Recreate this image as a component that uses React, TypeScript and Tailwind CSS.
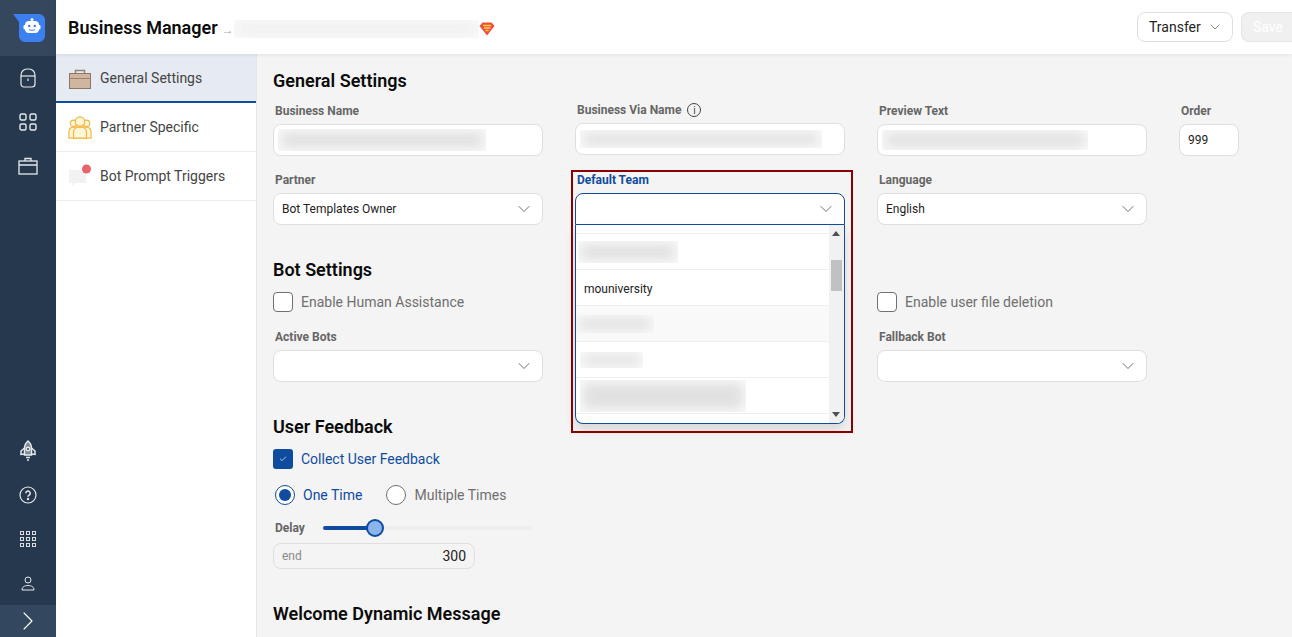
import type { ReactNode } from 'react';
import { ChevronDown, ChevronRight, Check } from 'lucide-react';

function Logo() {
  return (
    <svg width="32" height="28" viewBox="0 0 32 28">
      <path d="M0 0H26a6 6 0 0 1 6 6V22a6 6 0 0 1-6 6H12a6 6 0 0 1-6-6V8z" fill="#3b7ff0" />
      <circle cx="19" cy="5.5" r="1.5" fill="#fff" />
      <rect x="12" y="7" width="14" height="12" rx="4" fill="#fff" />
      <rect x="10.5" y="11" width="2" height="4.5" rx="1" fill="#fff" />
      <rect x="25.5" y="11" width="2" height="4.5" rx="1" fill="#fff" />
      <circle cx="16.2" cy="12" r="1.2" fill="#3b7ff0" />
      <circle cx="21.8" cy="12" r="1.2" fill="#3b7ff0" />
      <path d="M16 15.5c1.5 1.2 4.5 1.2 6 0" stroke="#3b7ff0" strokeWidth="1" fill="none" />
    </svg>
  );
}

function BagIcon() {
  return (
    <svg width="16" height="20" viewBox="0 0 16 20" fill="none" stroke="#e6e9ec" strokeWidth="1.2">
      <path d="M1 7a6 6 0 0 1 6-6h2a6 6 0 0 1 6 6v9a3 3 0 0 1-3 3H4a3 3 0 0 1-3-3z" />
      <path d="M1 8h14" />
      <path d="M8 10.500v2.500" />
    </svg>
  );
}

function TilesIcon() {
  return (
    <svg width="18" height="18" viewBox="0 0 18 18" fill="none" stroke="#e6e9ec" strokeWidth="1.4">
      <rect x="1" y="1" width="6" height="6" rx="1.5" />
      <rect x="11" y="1" width="6" height="6" rx="1.5" />
      <rect x="1" y="11" width="6" height="6" rx="1.5" />
      <rect x="11" y="11" width="6" height="6" rx="1.5" />
    </svg>
  );
}

function CaseIcon() {
  return (
    <svg width="20" height="18" viewBox="0 0 20 18" fill="none" stroke="#e6e9ec" strokeWidth="1.3">
      <rect x="1" y="4" width="18" height="13" />
      <path d="M1 8h18M7 4V1.500h6V4" />
    </svg>
  );
}

function RocketIcon() {
  return (
    <svg width="16" height="22" viewBox="0 0 16 22" fill="none" stroke="#e6e9ec" strokeWidth="1.5">
      <path d="M8 1c2.500 2 3.500 4.500 3.500 7.500V15h-7V8.500C4.500 5.500 5.500 3 8 1z" fill="#7f8b99" />
      <path d="M4.500 8 1 11v3.500l3.500-.5M11.500 8l3.500 3v3.500l-3.500-.5" />
      <circle cx="8" cy="9" r="1.700" fill="#26384e" />
      <path d="M6 17.500h4M7 20h2" />
    </svg>
  );
}

function HelpIcon() {
  return (
    <svg width="18" height="18" viewBox="0 0 18 18" fill="none" stroke="#e6e9ec" strokeWidth="1.2">
      <circle cx="9" cy="9" r="8" />
      <path d="M6.800 7.200a2.200 2.200 0 1 1 3.400 1.900c-.8.500-1.200.9-1.200 1.700" strokeWidth="1.500" />
      <circle cx="9" cy="13" r=".6" fill="#e6e9ec" />
    </svg>
  );
}

function DotsIcon() {
  const cells = [1.5, 7.5, 13.5];
  return (
    <svg width="18" height="18" viewBox="0 0 18 18" fill="none" stroke="#d9dde1" strokeWidth="1">
      {cells.map((y) =>
        cells.map((x) => <rect key={`${x}-${y}`} x={x} y={y} width="3" height="3" />)
      )}
    </svg>
  );
}

function UserIcon() {
  return (
    <svg width="14" height="15" viewBox="0 0 14 15" fill="none" stroke="#e6e9ec" strokeWidth="1">
      <circle cx="7" cy="4" r="3" />
      <path d="M1 14c0-3 2.500-4.500 6-4.500s6 1.500 6 4.500z" />
    </svg>
  );
}

function SuperShield() {
  return (
    <svg width="16" height="14" viewBox="0 0 16 14">
      <path d="M3.500 .5h9L15.500 4 8 13.500.5 4z" fill="#ef4f3c" />
      <path d="M4 3.500h8M5 6h6.500M6.500 8.500h3" stroke="#f8d04a" strokeWidth="1.300" />
    </svg>
  );
}

function BriefcaseColor() {
  return (
    <svg width="22" height="20" viewBox="0 0 22 20">
      <path d="M6.500 4.500V1.500h9v3" fill="none" stroke="#9a8374" strokeWidth="1.500" />
      <rect x=".5" y="4.500" width="21" height="15" fill="#d0b5a1" stroke="#8d7768" strokeWidth="1" />
      <path d="M.5 9.500h21" stroke="#8d7768" strokeWidth=".8" />
    </svg>
  );
}

function PeopleColor() {
  return (
    <svg width="26" height="25" viewBox="0 0 26 25" fill="#fff6d6" stroke="#f5b547" strokeWidth="1.300">
      <circle cx="6" cy="8" r="3.500" />
      <circle cx="20" cy="8" r="3.500" />
      <path d="M1 24v-6c0-4 2-6 5-6h14c3 0 5 2 5 6v6z" />
      <circle cx="13" cy="6" r="5" />
      <path d="M6 24v-7c0-3 3-5 7-5s7 2 7 5v7z" />
    </svg>
  );
}

function BubbleColor() {
  return (
    <svg width="24" height="24" viewBox="0 0 24 24">
      <path d="M1 6h17v13H8l-3.500 3v-3H1z" fill="#f2f2f2" />
      <circle cx="18.500" cy="5" r="4.500" fill="#e8636a" />
    </svg>
  );
}

function Rail() {
  const cell = 'flex h-[44px] items-center justify-center';
  return (
    <aside className="flex h-full w-[56px] shrink-0 flex-col bg-[#26384e]">
      <div className="flex h-[56px] items-center justify-center bg-[#35475c] pl-[1px]">
        <Logo />
      </div>
      <div className={cell}><BagIcon /></div>
      <div className={cell}><TilesIcon /></div>
      <div className={cell}><CaseIcon /></div>
      <div className="mt-auto" />
      <div className={cell}><RocketIcon /></div>
      <div className={cell}><HelpIcon /></div>
      <div className={cell}><DotsIcon /></div>
      <div className={cell}><UserIcon /></div>
      <div className="flex h-[32px] items-center justify-center bg-[#33485e]">
        <ChevronRight size={32} strokeWidth={0.8} color="#ffffff" />
      </div>
    </aside>
  );
}

function Redacted({ w, h, soft = false }: { w: number; h: number; soft?: boolean }) {
  return (
    <div className="overflow-hidden bg-[#fafafa]" style={{ width: w, height: h }}>
      <div
        className={`m-[3px] h-[calc(100%-6px)] blur-[6px] ${soft ? 'bg-[#efefef]' : 'bg-[#e0e0e0]'}`}
      />
    </div>
  );
}

function Label({ children, color = 'text-[#666666]' }: { children: ReactNode; color?: string }) {
  return (
    <div className={`mb-[5px] flex h-[16px] items-center pl-[2px] text-[12px] font-bold ${color}`}>
      {children}
    </div>
  );
}

function Box({ children, className = '' }: { children?: ReactNode; className?: string }) {
  return (
    <div className={`flex items-center rounded-[8px] border border-[#dfdfdf] bg-white ${className}`}>
      {children}
    </div>
  );
}

function Select({ value }: { value?: string }) {
  return (
    <Box className="h-[32px] justify-between pl-[8px] pr-[8px] text-[12px] text-[#222222]">
      <span>{value}</span>
      <ChevronDown size={20} strokeWidth={1} color="#555555" />
    </Box>
  );
}

function Heading({ children, className = '' }: { children: ReactNode; className?: string }) {
  return (
    <h2 className={`flex h-[26px] items-center text-[18px] font-semibold text-[#0b0b0b] ${className}`}>
      {children}
    </h2>
  );
}

function CheckRow({ label, checked = false }: { label: string; checked?: boolean }) {
  return (
    <div className="flex h-[20px] items-center gap-[8px]">
      {checked ? (
        <span className="flex h-[20px] w-[20px] items-center justify-center rounded-[3px] bg-[#0f4c9f]">
          <Check size={8} color="#ffffff" strokeWidth={2} />
        </span>
      ) : (
        <span className="h-[20px] w-[20px] rounded-[4px] border border-[#707070] bg-white" />
      )}
      <span className={`text-[14px] ${checked ? 'text-[#0f4c9f]' : 'text-[#6f6f6f]'}`}>{label}</span>
    </div>
  );
}

const teamRows = [
  { node: <div className="pl-[2px]"><Redacted w={100} h={22} /></div> },
  { node: <span className="mt-[2px] pl-[8px] text-[12px] text-[#222222]">mouniversity</span> },
  { node: <Redacted w={78} h={18} />, shaded: true },
  { node: <div className="pl-[4px]"><Redacted w={63} h={16} /></div> },
  { node: <div className="pl-[4px]"><Redacted w={166} h={32} /></div> },
];

function TeamDropdown() {
  return (
    <div className="absolute left-0 right-0 top-[32px] z-20 flex h-[199px] overflow-hidden rounded-b-[8px] border border-t-0 border-[#0f4c9f] bg-white shadow-[0_6px_12px_rgba(0,0,0,0.12)]">
      <div className="flex-1">
        <div className="h-[9px] border-b border-[#efefef]" />
        {teamRows.map((row, i) => (
          <div
            key={i}
            className={`flex h-[36px] items-center border-b border-[#efefef] ${row.shaded ? 'bg-[#f9f9f9]' : ''}`}
          >
            {row.node}
          </div>
        ))}
      </div>
      <div className="relative w-[15px] bg-[#f1f1f1]">
        <span className="absolute left-[3px] top-[6px] h-0 w-0 border-x-[4px] border-b-[5px] border-x-transparent border-b-[#505050]" />
        <span className="absolute left-[2px] top-[35px] h-[31px] w-[11px] bg-[#c1c1c1]" />
        <span className="absolute bottom-[6px] left-[3px] h-0 w-0 border-x-[4px] border-t-[5px] border-x-transparent border-t-[#505050]" />
      </div>
    </div>
  );
}

export default function App() {
  return (
    <div className="flex h-[637px] w-[1292px] overflow-hidden bg-white font-['Roboto',sans-serif]">
      <Rail />
      <div className="flex min-w-0 flex-1 flex-col">
        <header className="relative z-30 flex h-[54px] shrink-0 items-center bg-white pl-[12px] shadow-[0_1px_4px_rgba(0,0,0,0.08)]">
          <h1 className="text-[18px] font-semibold text-[#0b0b0b]">Business Manager</h1>
          <span className="ml-[4px] mt-[5px] text-[12px] text-[#aaaaaa]">→</span>
          <div className="mt-[3px]"><Redacted w={245} h={18} soft /></div>
          <div className="mt-[3px]"><SuperShield /></div>
          <div className="ml-auto flex items-center gap-[8px]">
            <div className="flex h-[30px] w-[96px] shrink-0 items-center rounded-[8px] border border-[#dfdfdf] bg-white pl-[11px] text-[14px] text-[#222222]">
              Transfer
              <ChevronDown size={16} strokeWidth={1} color="#555555" className="ml-[6px]" />
            </div>
            <div className="flex h-[30px] w-[51px] shrink-0 items-center rounded-l-[8px] border border-r-0 border-[#e4e4e4] bg-[#f0f0f0] pl-[11px] text-[14px] text-white">
              Save
            </div>
          </div>
        </header>

        <div className="flex min-h-0 flex-1">
          <nav className="w-[201px] shrink-0 border-r border-[#e6e6e6] bg-white">
            <div className="flex h-[49px] items-center gap-[8px] border-b-2 border-[#0f4c9f] bg-[#e6eaf3] pl-[12px] pt-[2px] text-[14px] text-[#444444]">
              <span className="flex w-[24px] justify-center"><BriefcaseColor /></span>General Settings
            </div>
            <div className="flex h-[49px] items-center gap-[8px] border-b border-[#ececec] pl-[12px] text-[14px] text-[#444444]">
              <span className="flex w-[24px] justify-center"><PeopleColor /></span>Partner Specific
            </div>
            <div className="flex h-[49px] items-center gap-[8px] border-b border-[#ececec] pl-[12px] text-[14px] text-[#444444]">
              <span className="flex w-[24px] justify-center"><BubbleColor /></span>Bot Prompt Triggers
            </div>
          </nav>

          <main className="min-w-0 flex-1 overflow-hidden bg-[#f4f4f4] pl-[16px] pt-[13px]">
            <Heading>General Settings</Heading>
            <div className="mt-[10px] grid grid-cols-[270px_270px_270px_60px] gap-x-[32px] gap-y-[16px]">
              <div>
                <Label>Business Name</Label>
                <Box className="h-[32px] pl-[4px]"><Redacted w={208} h={22} /></Box>
              </div>
              <div>
                <div className="-mt-[1px] mb-[1px]">
                  <Label>
                    Business Via Name
                    <span className="ml-[6px] flex h-[14px] w-[14px] items-center justify-center rounded-full border border-[#444444] text-[10px] font-normal text-[#444444]">
                      i
                    </span>
                  </Label>
                </div>
                <Box className="h-[32px] pl-[4px]"><Redacted w={242} h={18} /></Box>
              </div>
              <div>
                <Label>Preview Text</Label>
                <Box className="h-[32px] pl-[4px]"><Redacted w={206} h={20} /></Box>
              </div>
              <div>
                <Label>Order</Label>
                <Box className="h-[32px] pl-[8px] text-[12px] text-[#222222]">999</Box>
              </div>

              <div>
                <Label>Partner</Label>
                <Select value="Bot Templates Owner" />
              </div>
              <div className="relative">
                <div className="pointer-events-none absolute inset-x-[-4px] top-[-2px] z-30 h-[263px] w-[282px] border-2 border-[#8b0000]" />
                <Label color="text-[#0f4c9f]">Default Team</Label>
                <div className="relative">
                  <div className="flex h-[32px] items-center justify-end rounded-t-[8px] border border-[#0f4c9f] bg-white pr-[8px]">
                    <ChevronDown size={20} strokeWidth={1} color="#555555" />
                  </div>
                  <TeamDropdown />
                </div>
              </div>
              <div>
                <Label>Language</Label>
                <Select value="English" />
              </div>
            </div>

            <Heading className="mt-[31px]">Bot Settings</Heading>
            <div className="mt-[10px] grid grid-cols-[270px_270px_270px] gap-x-[32px]">
              <CheckRow label="Enable Human Assistance" />
              <div />
              <CheckRow label="Enable user file deletion" />
            </div>
            <div className="mt-[17px] grid grid-cols-[270px_270px_270px] gap-x-[32px]">
              <div>
                <Label>Active Bots</Label>
                <Select />
              </div>
              <div />
              <div>
                <Label>Fallback Bot</Label>
                <Select />
              </div>
            </div>

            <Heading className="mt-[31px]">User Feedback</Heading>
            <div className="mt-[10px]"><CheckRow label="Collect User Feedback" checked /></div>

            <div className="mt-[16px] flex h-[20px] items-center pl-[2px] text-[14px]">
              <span className="flex h-[20px] w-[20px] items-center justify-center rounded-full border border-[#0f4c9f] bg-white">
                <span className="h-[12px] w-[12px] rounded-full bg-[#0f4c9f]" />
              </span>
              <span className="ml-[8px] text-[#0f4c9f]">One Time</span>
              <span className="ml-[24px] h-[20px] w-[20px] rounded-full border border-[#707070] bg-white" />
              <span className="ml-[8px] text-[#6f6f6f]">Multiple Times</span>
            </div>

            <div className="mt-[13px] flex h-[20px] w-[260px] items-center">
              <span className="w-[50px] pl-[2px] text-[12px] font-bold text-[#666666]">Delay</span>
              <div className="relative h-[4px] flex-1 rounded-full bg-[#eeeeee]">
                <div className="h-full w-[52px] rounded-full bg-[#0f4c9f]" />
                <span className="absolute left-[43px] top-[-7px] h-[18px] w-[18px] rounded-full border-2 border-[#0f4c9f] bg-[#8ab4ec]" />
              </div>
            </div>

            <div className="mt-[5px] flex h-[26px] w-[202px] items-center justify-between rounded-[8px] border border-[#dfdfdf] bg-[#f4f4f4] px-[8px]">
              <span className="text-[12px] text-[#8a8a8a]">end</span>
              <span className="text-[14px] text-[#222222]">300</span>
            </div>

            <Heading className="mt-[31px]">Welcome Dynamic Message</Heading>
          </main>
        </div>
      </div>
    </div>
  );
}
